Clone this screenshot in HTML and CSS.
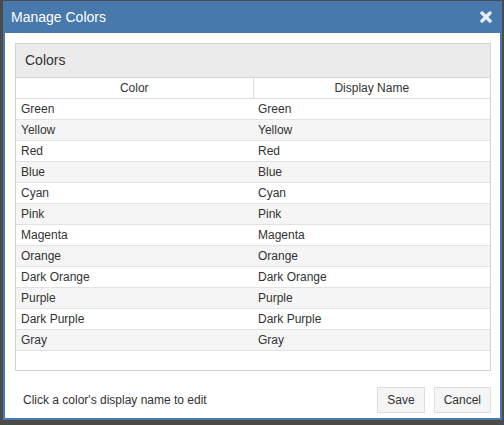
FILE: index.html
```html
<!DOCTYPE html>
<html>
  <head>
    <title>Manage Colors</title>
    <link rel="stylesheet" href="styles.css">
  </head>

  <body>
    <div class="dialog">
      <div class="dialog-header">
        <span class="dialog-title">Manage Colors</span>
        <svg class="close" width="12" height="12" viewBox="0 0 12 12">
          <path d="M2 2 L10 10 M10 2 L2 10" stroke="#e8eef5" stroke-width="3.4" stroke-linecap="round" fill="none"/>
        </svg>
      </div>

      <div class="dialog-body">
        <div class="panel">
          <div class="panel-heading">Colors</div>
          <div class="panel-body">
            <table class="colors">
              <thead>
                <tr><th>Color</th><th>Display Name</th></tr>
              </thead>
              <tbody>
                <tr><td>Green</td><td>Green</td></tr>
                <tr><td>Yellow</td><td>Yellow</td></tr>
                <tr><td>Red</td><td>Red</td></tr>
                <tr><td>Blue</td><td>Blue</td></tr>
                <tr><td>Cyan</td><td>Cyan</td></tr>
                <tr><td>Pink</td><td>Pink</td></tr>
                <tr><td>Magenta</td><td>Magenta</td></tr>
                <tr><td>Orange</td><td>Orange</td></tr>
                <tr><td>Dark Orange</td><td>Dark Orange</td></tr>
                <tr><td>Purple</td><td>Purple</td></tr>
                <tr><td>Dark Purple</td><td>Dark Purple</td></tr>
                <tr><td>Gray</td><td>Gray</td></tr>
              </tbody>
            </table>
          </div>
        </div>
      </div>

      <div class="dialog-footer">
        <div class="hint">Click a color's display name to edit</div>
        <div class="buttons">
          <button class="btn">Save</button>
          <button class="btn">Cancel</button>
        </div>
      </div>
    </div>
  </body>
</html>
```

FILE: styles.css
```css
html {
  height: 100%;
}

body {
  margin: 0;
  padding: 1px 0 0 3px;
  background: #4b4b4b;
  font-family: "Liberation Sans", Arial, sans-serif;
  color: #333;
}

.dialog {
  width: 495px;
  height: 417px;
  border: 2px solid #4779ad;
  border-top: 0;
  background: #fff;
  display: flex;
  flex-direction: column;
}

.dialog-header {
  height: 32px;
  background: #4779ad;
  display: flex;
  align-items: center;
  justify-content: space-between;
  padding: 0 8px 0 6px;
}

.dialog-title {
  color: #fff;
  font-size: 14px;
}

.close {
  display: block;
}

.dialog-body {
  padding: 10px 9px 0 10px;
}

.panel {
  border: 1px solid #d4d4d4;
}

.panel-heading {
  height: 33px;
  line-height: 33px;
  padding: 0 9px;
  background: #ebebeb;
  border-bottom: 1px solid #d4d4d4;
  font-size: 14px;
  color: #333;
}

.panel-body {
  padding-bottom: 19px;
}

.colors {
  width: 100%;
  border-collapse: collapse;
  font-size: 12px;
  table-layout: fixed;
}

.colors th {
  height: 20px;
  padding: 0;
  font-weight: normal;
  text-align: center;
  border-bottom: 1px solid #dcdcdc;
}

.colors th + th {
  border-left: 1px solid #dcdcdc;
}

.colors td {
  height: 20px;
  padding: 0 5px;
  border-bottom: 1px solid #e2e2e2;
}

.colors tbody tr:nth-child(even) {
  background: #f5f5f5;
}

.dialog-footer {
  display: flex;
  justify-content: space-between;
  align-items: center;
  padding: 16px 9px 0 18px;
}

.hint {
  font-size: 12px;
}

.buttons {
  display: flex;
  gap: 9px;
}

.btn {
  height: 26px;
  padding: 0 9px;
  border: 1px solid #dedede;
  background: #f5f5f5;
  font-family: "Liberation Sans", Arial, sans-serif;
  font-size: 12px;
  color: #333;
}
```
